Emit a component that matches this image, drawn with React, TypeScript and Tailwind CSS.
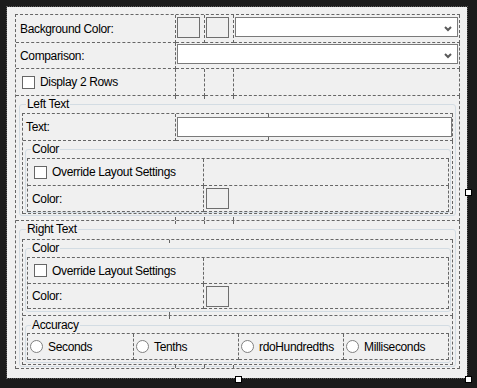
import React from 'react'

const cell = 'border-r border-b border-dashed border-[#666666]'
const table = 'grid border-t border-l border-dashed border-[#666666]'

function Swatch() {
  return <div className="w-[23px] h-[21px] border border-[#6e6e6e] bg-[#f0f0f0]" />
}

// column marker left by the designer where a spanning cell hides the line
function Tick({ className }: { className: string }) {
  return <span className={`absolute w-px h-[3px] bg-[#666666] ${className}`} />
}

function Combo({ width }: { width: string }) {
  return (
    <div className={`${width} h-[20px] border border-[#7a7a7a] bg-white flex items-center justify-end pr-[5px] pt-[3px]`}>
      <svg width="8" height="6" viewBox="0 0 8 6">
        <polyline points="1,1 4,4 7,1" fill="none" stroke="#5a5a5a" strokeWidth="2" />
      </svg>
    </div>
  )
}

function Check({ label }: { label: string }) {
  return (
    <div className="flex items-center gap-[5px]">
      <div className="w-[13px] h-[13px] border border-[#666666] bg-white" />
      <span>{label}</span>
    </div>
  )
}

function Radio({ label }: { label: string }) {
  return (
    <div className={`${cell} flex items-center pl-[2px] gap-[5px]`}>
      <div className="w-[13px] h-[13px] rounded-full border border-[#808080] bg-white" />
      <span>{label}</span>
    </div>
  )
}

function Group({ title, className, children }: { title: string; className: string; children: React.ReactNode }) {
  return (
    <fieldset className={`border border-[#d3dce3] rounded-[3px] ${className}`}>
      <legend className="ml-[4px] px-[1px] leading-[14px]">{title}</legend>
      {children}
    </fieldset>
  )
}

function ColorTable({ rows }: { rows: string }) {
  return (
    <div className={`${table} w-[422px] grid-cols-[176px_245px] ${rows}`}>
      <div className={`${cell} flex items-center pl-[6px]`}>
        <Check label="Override Layout Settings" />
      </div>
      <div className={cell} />
      <div className={`${cell} flex items-center pl-[4px]`}>Color:</div>
      <div className={`${cell} pl-[2px] pt-[2px]`}>
        <Swatch />
      </div>
    </div>
  )
}

export default function App() {
  return (
    <div className="relative w-[477px] h-[388px] bg-[#1b1b1b] pt-[6px] pl-[6px] text-[12px] leading-[14px] tracking-[-0.35px] text-black font-['Liberation_Sans',Arial,sans-serif]">
      <div className="w-[462px] h-[373px] border border-dotted border-[#5a5a5a]">
        <div className="w-[460px] h-[371px] bg-[#f0f0f0] pt-[7px] pl-[8px]">
          <div className={`${table} w-fit grid-cols-[160px_29px_29px_226px] grid-rows-[28px_26px_27px_125px_148px]`}>
            <div className={`${cell} flex items-center pl-[4px]`}>Background Color:</div>
            <div className={`${cell} pl-[1px] pt-[2px]`}>
              <Swatch />
            </div>
            <div className={`${cell} pl-[1px] pt-[2px]`}>
              <Swatch />
            </div>
            <div className={`${cell} pl-[1px] pt-[2px]`}>
              <Combo width="w-[223px]" />
            </div>

            <div className={`${cell} flex items-center pl-[4px]`}>Comparison:</div>
            <div className={`${cell} col-span-3 pl-[1px] pt-[1px]`}>
              <Combo width="w-[281px]" />
            </div>

            <div className={`${cell} flex items-center pl-[6px]`}>
              <Check label="Display 2 Rows" />
            </div>
            <div className={cell} />
            <div className={cell} />
            <div className={cell} />

            <div className={`${cell} relative col-span-4 pl-[3px] pt-[1px]`}>
              <Tick className="left-[159px] top-0" />
              <Tick className="left-[188px] top-0" />
              <Tick className="left-[217px] top-0" />
              <Tick className="left-[159px] bottom-0" />
              <Tick className="left-[188px] bottom-0" />
              <Tick className="left-[217px] bottom-0" />
              <Group title="Left Text" className="w-[437px] px-[2px] pt-[2px] pb-[1px]">
                <div className={`${table} w-[431px] grid-cols-[153px_277px] grid-rows-[27px_73px]`}>
                  <div className={`${cell} flex items-center pl-[3px]`}>Text:</div>
                  <div className={`${cell} relative pl-[1px] pt-[3px]`}>
                    <Tick className="left-[92px] top-0" />
                    <Tick className="left-[92px] bottom-0" />
                    <div className="w-[275px] h-[20px] border border-[#7a7a7a] bg-white" />
                  </div>
                  <div className={`${cell} col-span-2 pl-[2px] pt-[1px]`}>
                    <Group title="Color" className="w-[426px] px-[1px] pt-[2px]">
                      <ColorTable rows="grid-rows-[27px_26px]" />
                    </Group>
                  </div>
                </div>
              </Group>
            </div>

            <div className={`${cell} relative col-span-4 pl-[3px] pt-[1px]`}>
              <Tick className="left-[159px] top-0" />
              <Tick className="left-[188px] top-0" />
              <Tick className="left-[217px] top-0" />
              <Tick className="left-[159px] bottom-0" />
              <Tick className="left-[188px] bottom-0" />
              <Tick className="left-[217px] bottom-0" />
              <Group title="Right Text" className="w-[437px] px-[2px] pt-[3px] pb-[1px]">
                <div className={`${table} w-[431px] grid-cols-[430px] grid-rows-[76px_49px]`}>
                  <div className={`${cell} relative pl-[2px] pt-[1px]`}>
                    <Tick className="left-[146px] top-0" />
                    <Tick className="left-[146px] bottom-0" />
                    <Group title="Color" className="w-[426px] px-[1px] pt-[2px] pb-[2px]">
                      <ColorTable rows="grid-rows-[26px_25px]" />
                    </Group>
                  </div>
                  <div className={`${cell} relative pl-[2px] pt-[2px]`}>
                    <Tick className="left-[146px] top-0" />
                    <Group title="Accuracy" className="w-[426px] px-[1px] pt-[1px] pb-[2px]">
                      <div className={`${table} w-[422px] grid-cols-[106px_105px_105px_105px] grid-rows-[26px]`}>
                        <Radio label="Seconds" />
                        <Radio label="Tenths" />
                        <Radio label="rdoHundredths" />
                        <Radio label="Milliseconds" />
                      </div>
                    </Group>
                  </div>
                </div>
              </Group>
            </div>
          </div>
        </div>
      </div>

      <div className="absolute left-[465px] top-[189px] w-[7px] h-[7px] bg-white border border-black" />
      <div className="absolute left-[235px] top-[376px] w-[7px] h-[7px] bg-white border border-black" />
      <div className="absolute left-[465px] top-[376px] w-[7px] h-[7px] bg-white border border-black" />
    </div>
  )
}
